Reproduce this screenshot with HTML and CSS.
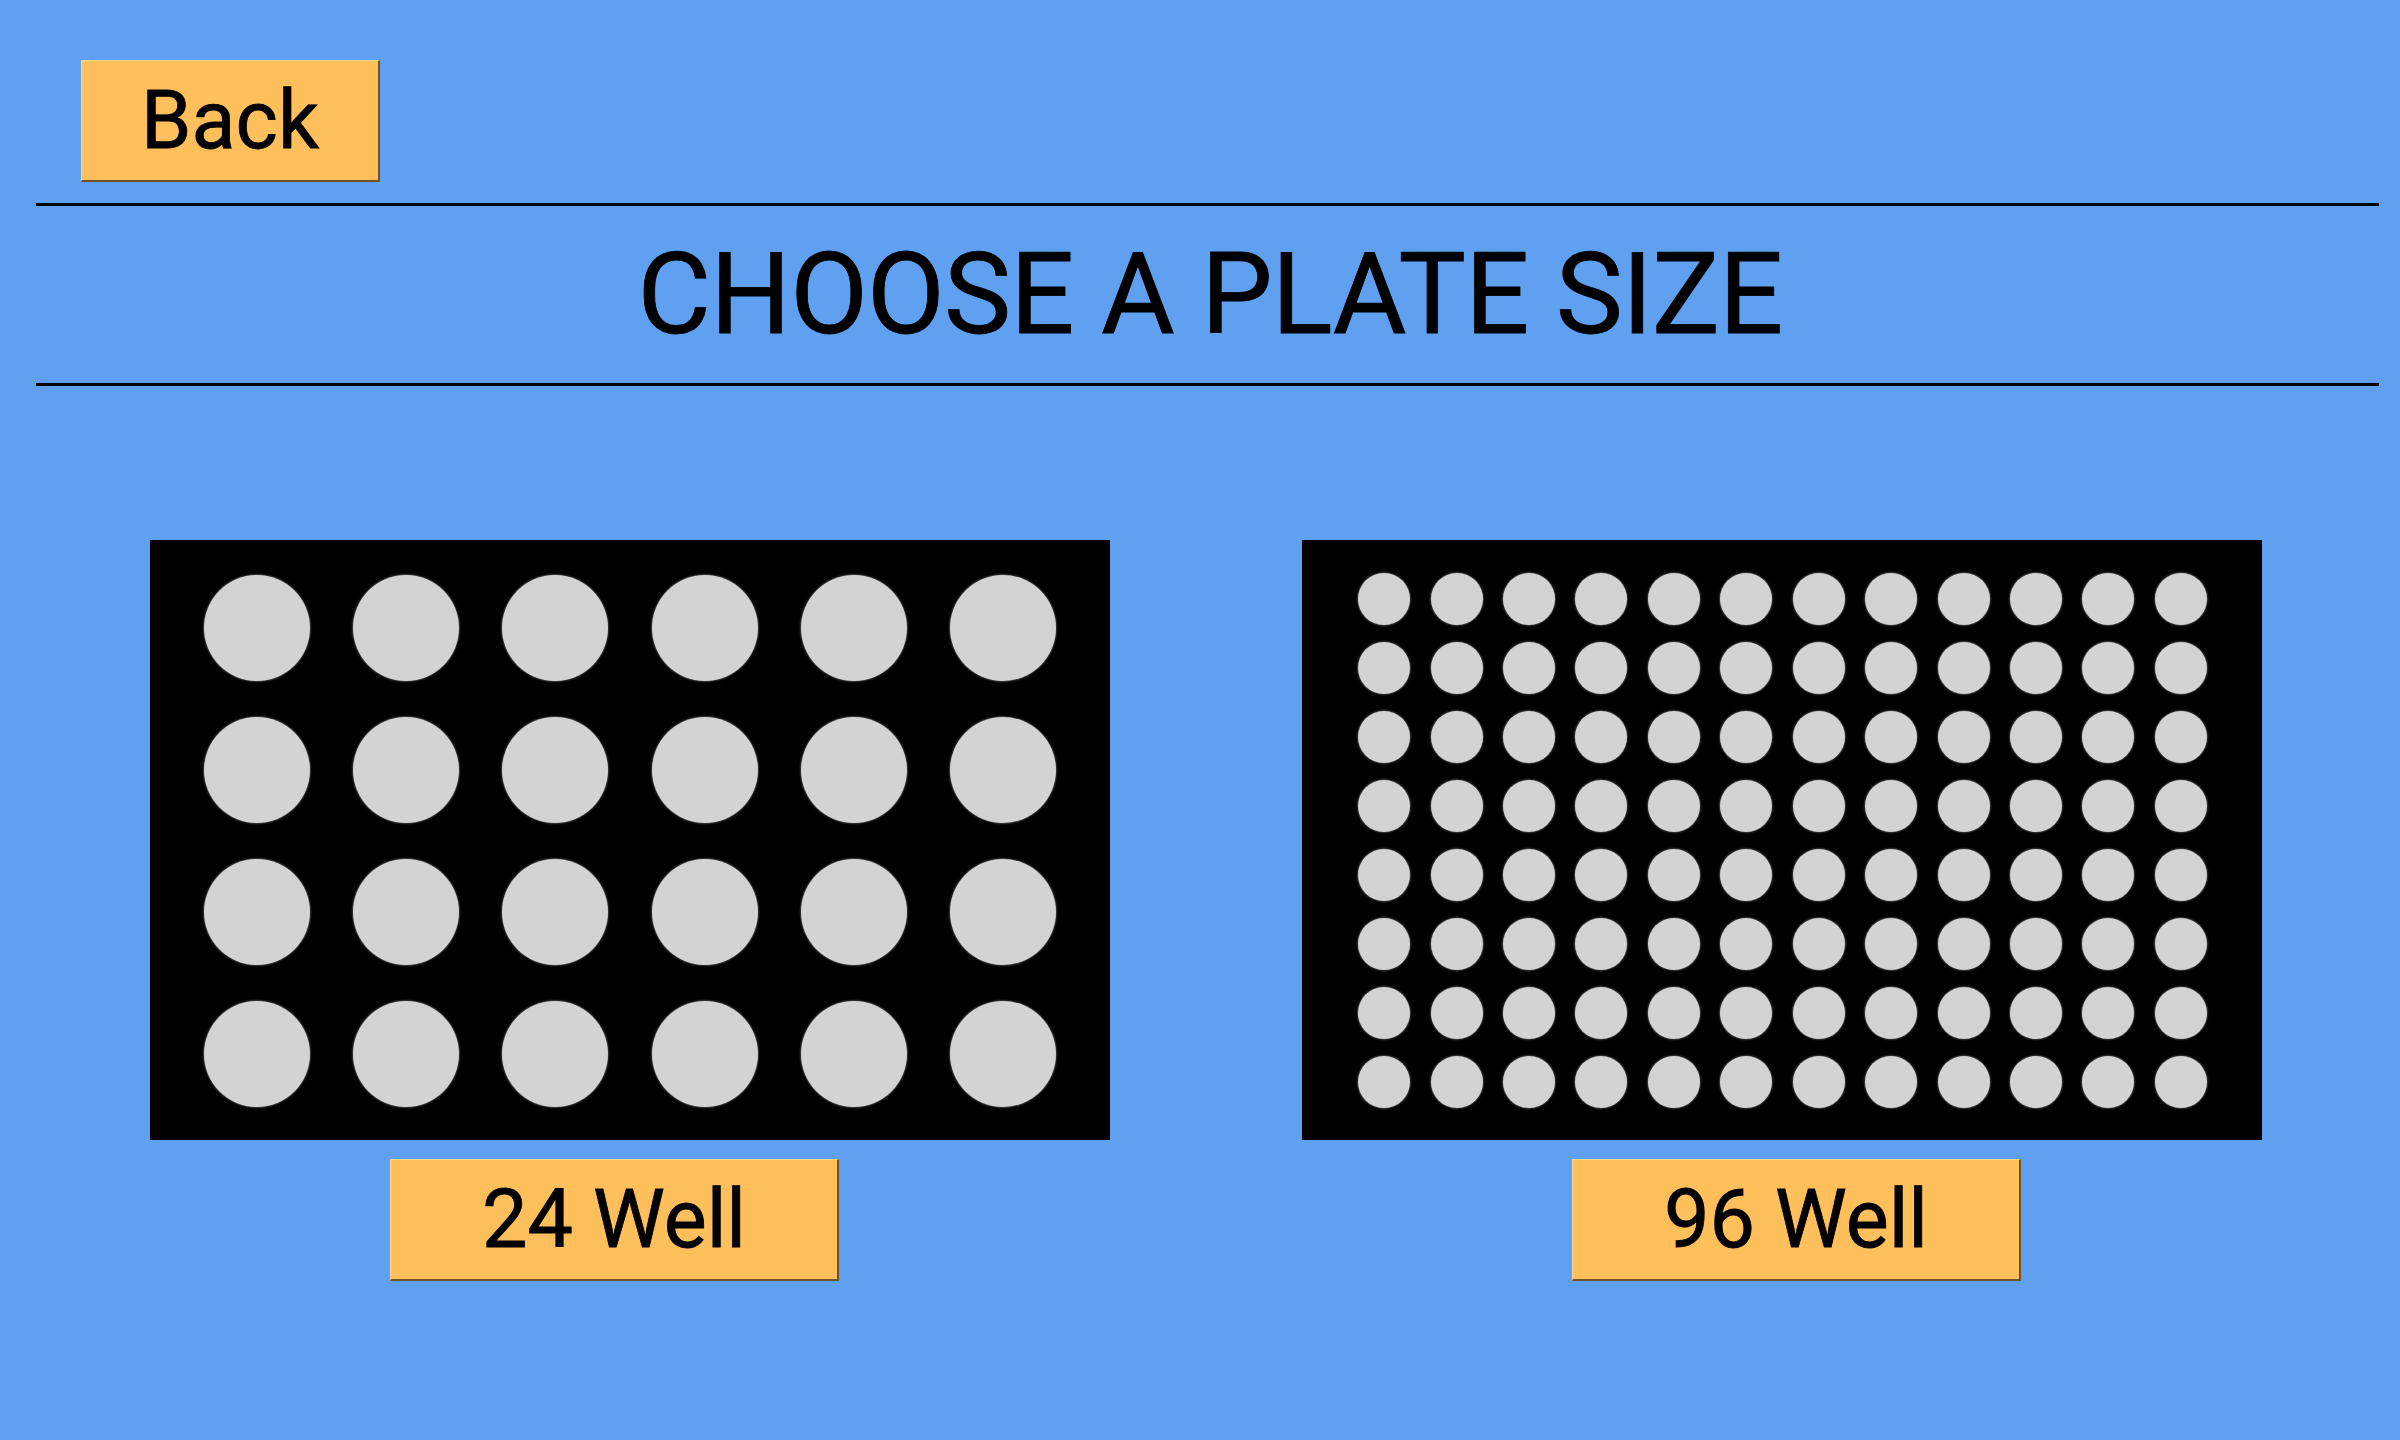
FILE: index.html
```html
<!DOCTYPE html>
<html>
<head>
<meta charset="utf-8">
<title>Choose a plate size</title>
<link rel="stylesheet" href="styles.css">
</head>
<body>
<div class="app">
  <div class="topbar">
    <button class="btn btn-back">Back</button>
  </div>
  <div class="rule"></div>
  <h1 class="title">CHOOSE A PLATE SIZE</h1>
  <div class="rule"></div>
  <div class="plates">
    <div class="plate-col col-24">
      <div class="plate plate-24">
        <span class="well"></span><span class="well"></span><span class="well"></span><span class="well"></span><span class="well"></span><span class="well"></span>
        <span class="well"></span><span class="well"></span><span class="well"></span><span class="well"></span><span class="well"></span><span class="well"></span>
        <span class="well"></span><span class="well"></span><span class="well"></span><span class="well"></span><span class="well"></span><span class="well"></span>
        <span class="well"></span><span class="well"></span><span class="well"></span><span class="well"></span><span class="well"></span><span class="well"></span>
      </div>
      <button class="btn btn-well btn-24">24 Well</button>
    </div>
    <div class="plate-col col-96">
      <div class="plate plate-96">
        <span class="well"></span><span class="well"></span><span class="well"></span><span class="well"></span><span class="well"></span><span class="well"></span><span class="well"></span><span class="well"></span><span class="well"></span><span class="well"></span><span class="well"></span><span class="well"></span>
        <span class="well"></span><span class="well"></span><span class="well"></span><span class="well"></span><span class="well"></span><span class="well"></span><span class="well"></span><span class="well"></span><span class="well"></span><span class="well"></span><span class="well"></span><span class="well"></span>
        <span class="well"></span><span class="well"></span><span class="well"></span><span class="well"></span><span class="well"></span><span class="well"></span><span class="well"></span><span class="well"></span><span class="well"></span><span class="well"></span><span class="well"></span><span class="well"></span>
        <span class="well"></span><span class="well"></span><span class="well"></span><span class="well"></span><span class="well"></span><span class="well"></span><span class="well"></span><span class="well"></span><span class="well"></span><span class="well"></span><span class="well"></span><span class="well"></span>
        <span class="well"></span><span class="well"></span><span class="well"></span><span class="well"></span><span class="well"></span><span class="well"></span><span class="well"></span><span class="well"></span><span class="well"></span><span class="well"></span><span class="well"></span><span class="well"></span>
        <span class="well"></span><span class="well"></span><span class="well"></span><span class="well"></span><span class="well"></span><span class="well"></span><span class="well"></span><span class="well"></span><span class="well"></span><span class="well"></span><span class="well"></span><span class="well"></span>
        <span class="well"></span><span class="well"></span><span class="well"></span><span class="well"></span><span class="well"></span><span class="well"></span><span class="well"></span><span class="well"></span><span class="well"></span><span class="well"></span><span class="well"></span><span class="well"></span>
        <span class="well"></span><span class="well"></span><span class="well"></span><span class="well"></span><span class="well"></span><span class="well"></span><span class="well"></span><span class="well"></span><span class="well"></span><span class="well"></span><span class="well"></span><span class="well"></span>
      </div>
      <button class="btn btn-well btn-96">96 Well</button>
    </div>
  </div>
</div>
</body>
</html>
```

FILE: styles.css
```css
* { box-sizing: border-box; }

html, body {
  margin: 0;
  padding: 0;
  background: #5fa0f1;
}

.app {
  width: 2400px;
  height: 1440px;
  background: #5fa0f1;
  font-family: Roboto, "Liberation Sans", sans-serif;
  color: #000;
  overflow: hidden;
}

.topbar {
  padding: 60px 0 0 81px;
  height: 203px;
}

.btn {
  display: flex;
  align-items: center;
  justify-content: center;
  margin: 0;
  padding: 0;
  background: #ffbf5a;
  border-top: 1px solid #ffd891;
  border-left: 1px solid #ffd891;
  border-right: 2px solid #6e5226;
  border-bottom: 2px solid #6e5226;
  border-radius: 0;
  font-family: Roboto, "Liberation Sans", sans-serif;
  font-size: 81px;
  font-weight: 400;
  color: #000;
  line-height: 1;
  height: 122px;
  -webkit-text-stroke: 0.8px #000;
}

.btn-back {
  width: 299px;
}

.rule {
  height: 3px;
  background: #000;
  margin: 0 21px 0 36px;
}

.title {
  margin: 0;
  height: 177px;
  display: flex;
  align-items: center;
  justify-content: center;
  padding-left: 20px;
  font-size: 113px;
  font-weight: 400;
  letter-spacing: -0.8px;
  -webkit-text-stroke: 0.8px #000;
}

.plates {
  display: flex;
  padding: 154px 0 0 150px;
  gap: 192px;
}

.plate-col {
  display: flex;
  flex-direction: column;
  width: 960px;
}

.plate {
  width: 960px;
  height: 600px;
  background: #000;
  display: grid;
  justify-items: center;
  align-items: center;
}

.plate-24 {
  padding: 17px 32px 15px 32px;
  grid-template-columns: repeat(6, 1fr);
  grid-template-rows: repeat(4, 1fr);
}

.plate-96 {
  padding: 24px 45px 23px 46px;
  grid-template-columns: repeat(12, 1fr);
  grid-template-rows: repeat(8, 1fr);
}

.well {
  display: block;
  border-radius: 50%;
  background: #d3d3d3;
  box-shadow: 0 0 2px 0.5px rgba(110, 110, 110, 0.9);
}

.plate-24 .well {
  width: 106px;
  height: 106px;
}

.plate-96 .well {
  width: 52px;
  height: 52px;
}

.btn-well {
  width: 449px;
  margin-top: 19px;
}

.btn-24 {
  margin-left: 240px;
}

.btn-96 {
  margin-left: 270px;
}
```
